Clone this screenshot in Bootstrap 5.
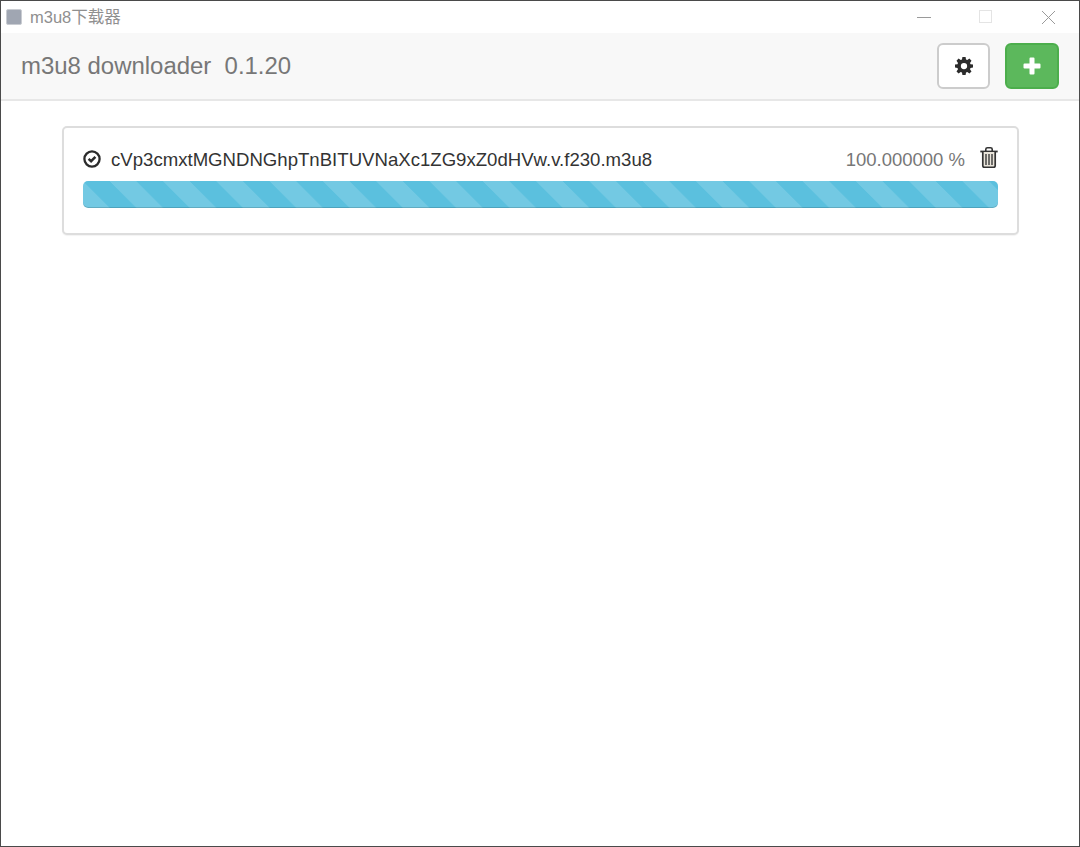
<!DOCTYPE html>
<html lang="zh">
<head>
<meta charset="utf-8">
<title>m3u8下载器</title>
<link rel="stylesheet" href="https://cdn.jsdelivr.net/npm/bootstrap@5.3.0/dist/css/bootstrap.min.css">
<style>
html,body{height:100%;}
body{font-family:"Liberation Sans","Noto Sans CJK SC",sans-serif;background:#fff;}
.win-frame{height:847px;border:1px solid #4a4a4a;display:flex;flex-direction:column;overflow:hidden;}
.win-title{height:32px;flex:none;color:#8f8f8f;font-size:16.5px;padding-left:5px;padding-right:23px;}
.win-logo{width:16px;height:16px;background:#a0a6b2;border:1px solid #c9ccd2;border-radius:2px;margin-right:8px;}
.win-ctrl{gap:48px;}
.app-bar{height:68px;flex:none;background:#f8f8f8;border-bottom:2px solid #e7e7e7;padding:0 20px;}
.app-name{font-size:23.95px;color:#777;white-space:pre;line-height:1;}
.tool-btn{height:46px;padding:0;border-width:2px;border-radius:6px;display:flex;align-items:center;justify-content:center;}
.tool-gear{width:53px;background:#fff;border-color:#ccc;}
.tool-add{width:54px;background:#5cb85c;border-color:#4cae4c;margin-left:15px;}
.job-wrap{padding:25px 60px 0 61px;}
.job-card{height:109px;border:2px solid #ddd;border-radius:5px;box-shadow:0 1px 1px rgba(0,0,0,.05);padding:19px 19px 0 19px;}
.job-head{height:26px;margin-bottom:8px;}
.job-check{margin-top:-2px;}
.job-trash{margin-top:-5px;}
.job-name{font-size:18.6px;color:#333;margin-left:10px;line-height:26px;}
.job-pct{font-size:18.5px;color:#777;line-height:26px;margin-right:15px;}
.job-bar{height:27px;border-radius:5px;background-color:#5bc0de;box-shadow:inset 0 -1px 0 rgba(0,0,0,.15);background-image:linear-gradient(45deg,rgba(255,255,255,.15) 25%,transparent 25%,transparent 50%,rgba(255,255,255,.15) 50%,rgba(255,255,255,.15) 75%,transparent 75%,transparent);background-size:53.3px 53.3px;background-position:27px 0;}
</style>
</head>
<body>
<div class="win-frame">
  <div class="win-title d-flex align-items-center">
    <span class="win-logo"></span>
    <span>m3u8下载器</span>
    <div class="win-ctrl d-flex align-items-center ms-auto">
      <svg width="14" height="14" viewBox="0 0 14 14"><path d="M0 7.5h14" stroke="#9a9a9a" stroke-width="1"/></svg>
      <svg width="14" height="14" viewBox="0 0 14 14"><rect x=".5" y=".5" width="12" height="12" fill="none" stroke="#e4e4e4"/></svg>
      <svg width="15" height="15" viewBox="0 0 15 15"><path d="M1 1l13 13M14 1L1 14" stroke="#9a9a9a" stroke-width="1" fill="none"/></svg>
    </div>
  </div>
  <div class="app-bar d-flex align-items-center">
    <span class="app-name">m3u8 downloader  0.1.20</span>
    <button class="btn tool-btn tool-gear ms-auto" type="button" aria-label="settings">
      <svg width="18" height="18" viewBox="0 0 18 18"><path fill="#2b2b2b" fill-rule="evenodd" d="M7.4 0h3.2l.4 2.5 1.3.6L14.4 1.600l2.100 2.200L15 5.900l.5 1.300 2.500.4v3l-2.500.4-.5 1.300 1.500 2.100-2.100 2.200-2.100-1.500-1.300.5-.4 2.400H7.400L7 15.600l-1.300-.5-2.100 1.500-2.100-2.200L3 12.300l-.5-1.300L0 10.600v-3l2.500-.4.5-1.300-1.500-2.100 2.100-2.200 2.100 1.500L7 2.500zM9 5.900a3.150 3.150 0 1 0 0 6.300 3.150 3.150 0 0 0 0-6.300z"/></svg>
    </button>
    <button class="btn tool-btn tool-add" type="button" aria-label="add">
      <svg width="18" height="18" viewBox="0 0 18 18"><path fill="#fff" d="M6.500 1.500a1 1 0 0 1 1-1h3a1 1 0 0 1 1 1v5h5a1 1 0 0 1 1 1v3a1 1 0 0 1-1 1h-5v5a1 1 0 0 1-1 1h-3a1 1 0 0 1-1-1v-5h-5a1 1 0 0 1-1-1v-3a1 1 0 0 1 1-1h5z"/></svg>
    </button>
  </div>
  <div class="job-wrap">
    <div class="job-card bg-white">
      <div class="job-head d-flex align-items-center">
        <svg class="job-check" width="18" height="18" viewBox="0 0 18 18"><circle cx="9" cy="9" r="7.600" fill="none" stroke="#2b2b2b" stroke-width="2.300"/><path d="M5.600 8.800l2.500 2.400 4.300-4.300" fill="none" stroke="#2b2b2b" stroke-width="2.500"/></svg>
        <span class="job-name">cVp3cmxtMGNDNGhpTnBITUVNaXc1ZG9xZ0dHVw.v.f230.m3u8</span>
        <span class="job-pct ms-auto">100.000000 %</span>
        <svg class="job-trash" width="18" height="21" viewBox="0 0 18 21"><path fill="none" stroke="#333" stroke-width="1.600" d="M5.800 4V2.300C5.800 1.300 6.600.8 7.500.8h3c.9 0 1.700.5 1.700 1.500V4"/><path stroke="#333" stroke-width="1.800" d="M.3 4.500h17.400"/><path fill="#e9e4da" stroke="#333" stroke-width="1.700" d="M2.800 5v13.800c0 1 .7 1.500 1.700 1.500h9c1 0 1.700-.5 1.700-1.500V5"/><path stroke="#444" stroke-width="1.500" d="M6 7v11M9 7v11M12 7v11"/></svg>
      </div>
      <div class="job-bar"></div>
    </div>
  </div>
</div>
</body>
</html>
